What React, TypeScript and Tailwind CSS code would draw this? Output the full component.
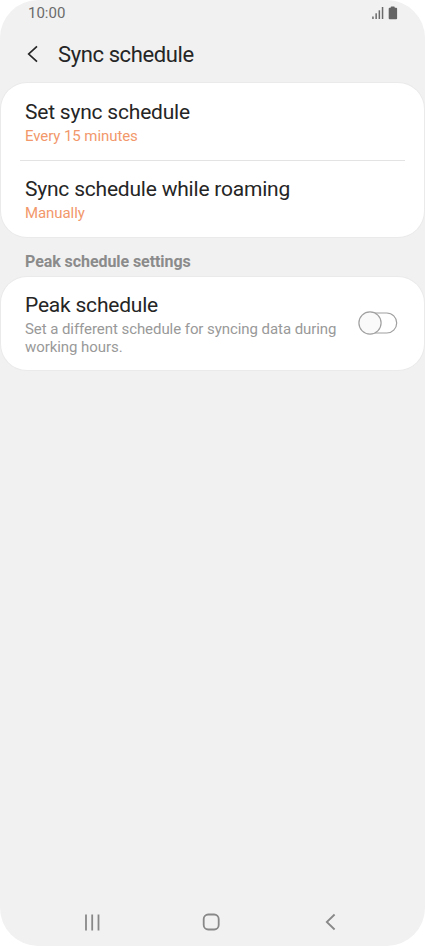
import type { ReactNode } from "react";

function StatusBar() {
  return (
    <div className="flex h-[27px] items-center justify-between pl-7 pr-[27px] text-[15px] leading-[27px] text-[#6b6b6b]">
      <span>10:00</span>
      <div className="-mt-0.5 flex items-center gap-1">
        <svg width="12" height="14" viewBox="0 0 12 14" fill="#6a6a6a">
          <rect x="0.2" y="10.5" width="1.5" height="2.5" />
          <rect x="3.4" y="7.3" width="1.5" height="5.7" />
          <rect x="6.6" y="4.3" width="1.5" height="8.7" />
          <rect x="9.8" y="1" width="1.5" height="12" />
        </svg>
        <svg width="10" height="14" viewBox="0 0 10 14" fill="#646464">
          <rect x="2.7" y="0.4" width="4" height="3" rx="0.7" />
          <rect x="0.7" y="1.8" width="8.4" height="11.4" rx="1" />
        </svg>
      </div>
    </div>
  );
}

function Card({ className, children }: { className: string; children: ReactNode }) {
  return (
    <section className={`mx-px rounded-[26px] bg-white ring-1 ring-[#eaeaea] ${className}`}>
      {children}
    </section>
  );
}

function ScheduleItem({ title, value }: { title: string; value: string }) {
  return (
    <div className="h-[77px] pl-6 pt-4">
      <div className="text-[21px] leading-[26px] tracking-[-0.21px] text-[#252525]">{title}</div>
      <div className="text-[15px] leading-[22px] tracking-[-0.08px] text-[#f2986b]">{value}</div>
    </div>
  );
}

function Toggle() {
  return (
    <svg
      className="-mt-0.5"
      width="40"
      height="24"
      viewBox="0 0 40 24"
      fill="none"
      stroke="#a0a0a0"
      strokeWidth="1.2"
    >
      <rect x="2" y="2" width="36.7" height="20" rx="10" />
      <circle cx="12" cy="12" r="11.1" fill="#fafafa" />
    </svg>
  );
}

export default function App() {
  return (
    <div className="h-[946px] w-[425px] bg-white">
      <div className="flex h-[946px] w-[425px] flex-col overflow-hidden rounded-[38px] bg-[#f1f1f1] font-['Roboto',sans-serif]">
        <StatusBar />

        <header className="flex h-14 items-center pl-[26px]">
          <svg
            className="-mt-0.5"
            width="14"
            height="18"
            viewBox="0 0 14 18"
            fill="none"
            stroke="#252525"
            strokeWidth="1.7"
          >
            <path d="M11 1.3 2.7 9l8.3 7.7" />
          </svg>
          <h1 className="ml-[18px] text-[22px] leading-7 tracking-[-0.39px] text-[#252525]">Sync schedule</h1>
        </header>

        <Card className="h-[154px]">
          <ScheduleItem title="Set sync schedule" value="Every 15 minutes" />
          <div className="mx-[19px] -mb-px h-px bg-[#e3e3e3]" />
          <ScheduleItem title="Sync schedule while roaming" value="Manually" />
        </Card>

        <h2 className="h-10 pl-[25px] pt-3.5 text-[16px] font-bold leading-[22px] tracking-[-0.07px] text-[#8b8b8b]">
          Peak schedule settings
        </h2>

        <Card className="flex h-[93px] items-center justify-between pl-6 pr-[26px]">
          <div>
            <div className="text-[21px] leading-[26px] tracking-[-0.21px] text-[#252525]">Peak schedule</div>
            <p className="mt-[3px] -mb-px whitespace-nowrap text-[15px] leading-[17.5px] tracking-[-0.065px] text-[#999999]">
              Set a different schedule for syncing data during
              <br />
              working hours.
            </p>
          </div>
          <Toggle />
        </Card>

        <nav className="mt-auto flex h-12 items-center pl-[84px]">
          <svg width="16" height="17" viewBox="0 0 16 17" stroke="#888888" strokeWidth="1.8">
            <path d="M2 0.5v16M8.2 0.5v16M14.5 0.5v16" />
          </svg>
          <svg
            className="ml-[102px]"
            width="18"
            height="18"
            viewBox="0 0 18 18"
            fill="none"
            stroke="#888888"
            strokeWidth="1.8"
          >
            <rect x="1.7" y="1.5" width="15" height="15" rx="4.5" />
          </svg>
          <svg
            className="ml-[105px]"
            width="12"
            height="18"
            viewBox="0 0 12 18"
            fill="none"
            stroke="#888888"
            strokeWidth="1.8"
          >
            <path d="M9.6 1.5 1.8 9l7.8 7.5" />
          </svg>
        </nav>
      </div>
    </div>
  );
}
